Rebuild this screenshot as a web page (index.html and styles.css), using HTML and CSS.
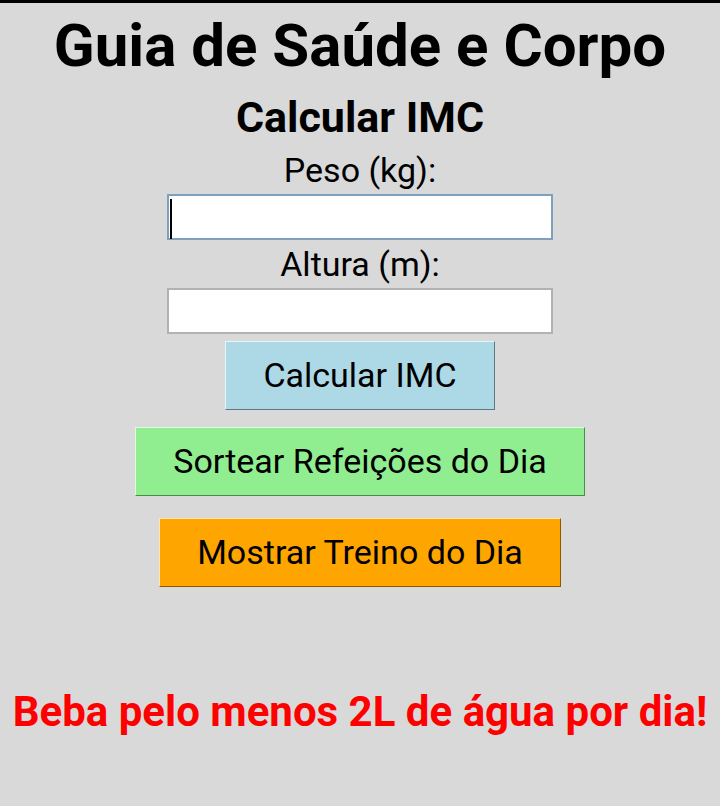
FILE: index.html
```html
<!DOCTYPE html>
<html lang="pt">
<head>
<meta charset="utf-8">
<title>Guia de Saúde e Corpo</title>
<link rel="stylesheet" href="styles.css">
</head>
<body>
<main class="app">
  <h1 class="title">Guia de Saúde e Corpo</h1>
  <h2 class="subtitle">Calcular IMC</h2>
  <label class="field-label label-peso" for="peso">Peso (kg):</label>
  <div class="input-box input-focus"><span class="caret"></span><input id="peso" class="field" type="text"></div>
  <label class="field-label label-altura" for="altura">Altura (m):</label>
  <div class="input-box"><input id="altura" class="field" type="text"></div>
  <button class="btn btn-imc" type="button">Calcular IMC</button>
  <button class="btn btn-meals" type="button">Sortear Refeições do Dia</button>
  <button class="btn btn-workout" type="button">Mostrar Treino do Dia</button>
  <p class="tip">Beba pelo menos 2L de água por dia!</p>
</main>
</body>
</html>
```

FILE: styles.css
```css
html, body {
  margin: 0;
  padding: 0;
}
body {
  background: #d9d9d9;
  border-top: 3px solid #000;
  height: 803px;
  overflow: hidden;
  font-family: Roboto, "Liberation Sans", sans-serif;
  color: #000;
}
.app {
  display: flex;
  flex-direction: column;
  align-items: center;
}
.title {
  margin: 8px 0 0;
  font-size: 60px;
  line-height: 70px;
  font-weight: 700;
  white-space: nowrap;
}
.subtitle {
  margin: 11px 0 0;
  font-size: 43px;
  line-height: 50px;
  font-weight: 700;
}
.field-label {
  font-size: 34px;
  line-height: 40px;
  font-weight: 400;
}
.label-peso { margin-top: 8px; }
.label-altura { margin-top: 4px; }
.input-box {
  position: relative;
  margin-top: 4px;
  width: 382px;
  height: 42px;
  border: 2px solid #b2b2b2;
  background: #fff;
}
.input-focus {
  border-color: #7f9fbf;
}
.field {
  width: 100%;
  height: 100%;
  box-sizing: border-box;
  border: 0;
  outline: none;
  background: transparent;
  padding: 0 4px;
  font: inherit;
  font-size: 28px;
}
.caret {
  position: absolute;
  left: 1px;
  top: 3px;
  width: 2px;
  height: 40px;
  background: #000;
}
.btn {
  font-family: Roboto, "Liberation Sans", sans-serif;
  font-size: 34px;
  line-height: 67px;
  height: 69px;
  padding: 0 37px;
  border: 1px solid;
  color: #000;
  cursor: pointer;
}
.btn-imc {
  margin-top: 7px;
  background: #add8e6;
  border-color: #e6f3f7 #5c7a84 #5c7a84 #e6f3f7;
}
.btn-meals {
  margin-top: 17px;
  background: #90ee90;
  border-color: #dcfadc #4e8a4e #4e8a4e #dcfadc;
}
.btn-workout {
  margin-top: 22px;
  background: #ffa500;
  border-color: #ffe6b0 #8a5a00 #8a5a00 #ffe6b0;
}
.tip {
  margin: 100px 0 0;
  font-size: 42px;
  line-height: 49px;
  font-weight: 700;
  color: #ff0000;
  white-space: nowrap;
}
```
